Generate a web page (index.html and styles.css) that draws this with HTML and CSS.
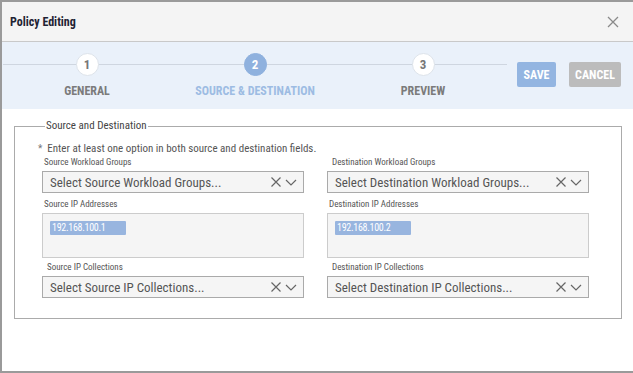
FILE: index.html
```html
<!DOCTYPE html>
<html>
<head>
<meta charset="utf-8">
<link rel="stylesheet" href="styles.css">
</head>
<body>
<div class="modal">
  <div class="header">
    <div class="title">Policy Editing</div>
    <svg class="close" width="12" height="12" viewBox="0 0 12 12"><path d="M1 1L11 11M11 1L1 11" stroke="#8a8a8a" stroke-width="1.3" fill="none"/></svg>
  </div>
  <div class="stepsbar">
    <div class="steps">
      <div class="step">
        <div class="circle">1</div>
        <div class="slabel">GENERAL</div>
      </div>
      <div class="step active">
        <div class="circle">2</div>
        <div class="slabel">SOURCE &amp; DESTINATION</div>
      </div>
      <div class="step">
        <div class="circle">3</div>
        <div class="slabel">PREVIEW</div>
      </div>
    </div>
    <div class="actions">
      <div class="btn save">SAVE</div>
      <div class="btn cancel">CANCEL</div>
    </div>
  </div>
  <div class="content">
    <fieldset class="fs">
      <legend class="legend">Source and Destination</legend>
      <div class="note"><span class="star">*</span>Enter at least one option in both source and destination fields.</div>
      <div class="grid">
        <div class="col">
          <div class="lbl">Source Workload Groups</div>
          <div class="select"><span class="ph">Select Source Workload Groups...</span>
            <span class="icons"><svg width="12" height="12" viewBox="0 0 12 12"><path d="M1.5 1.5L10.5 10.5M10.5 1.5L1.5 10.5" stroke="#666" stroke-width="1.2" fill="none"/></svg><svg width="12" height="12" viewBox="0 0 12 12"><path d="M1 4L6 9L11 4" stroke="#666" stroke-width="1.2" fill="none"/></svg></span>
          </div>
          <div class="lbl">Source IP Addresses</div>
          <div class="area"><span class="chip">192.168.100.1</span></div>
          <div class="lbl ind">Source IP Collections</div>
          <div class="select last"><span class="ph">Select Source IP Collections...</span>
            <span class="icons"><svg width="12" height="12" viewBox="0 0 12 12"><path d="M1.5 1.5L10.5 10.5M10.5 1.5L1.5 10.5" stroke="#666" stroke-width="1.2" fill="none"/></svg><svg width="12" height="12" viewBox="0 0 12 12"><path d="M1 4L6 9L11 4" stroke="#666" stroke-width="1.2" fill="none"/></svg></span>
          </div>
        </div>
        <div class="col">
          <div class="lbl ind">Destination Workload Groups</div>
          <div class="select"><span class="ph">Select Destination Workload Groups...</span>
            <span class="icons"><svg width="12" height="12" viewBox="0 0 12 12"><path d="M1.5 1.5L10.5 10.5M10.5 1.5L1.5 10.5" stroke="#666" stroke-width="1.2" fill="none"/></svg><svg width="12" height="12" viewBox="0 0 12 12"><path d="M1 4L6 9L11 4" stroke="#666" stroke-width="1.2" fill="none"/></svg></span>
          </div>
          <div class="lbl">Destination IP Addresses</div>
          <div class="area"><span class="chip">192.168.100.2</span></div>
          <div class="lbl ind">Destination IP Collections</div>
          <div class="select last"><span class="ph">Select Destination IP Collections...</span>
            <span class="icons"><svg width="12" height="12" viewBox="0 0 12 12"><path d="M1.5 1.5L10.5 10.5M10.5 1.5L1.5 10.5" stroke="#666" stroke-width="1.2" fill="none"/></svg><svg width="12" height="12" viewBox="0 0 12 12"><path d="M1 4L6 9L11 4" stroke="#666" stroke-width="1.2" fill="none"/></svg></span>
          </div>
        </div>
      </div>
    </fieldset>
  </div>
</div>
</body>
</html>
```
FILE: styles.css
```css
* { box-sizing: border-box; }
html, body { margin: 0; padding: 0; }
body {
  background: #9a9a9a;
  font-family: "Roboto Condensed", "Open Sans Condensed", Roboto, "DejaVu Sans Condensed", sans-serif;
  font-stretch: condensed;
  width: 633px;
  height: 373px;
  overflow: hidden;
  white-space: nowrap;
}
.modal {
  margin: 2px 0 0 2px;
  width: 631px;
  height: 369px;
  background: #fff;
  display: flex;
  flex-direction: column;
}
.header {
  height: 40px;
  background: #f4f4f4;
  border-bottom: 1px solid #c9c9c9;
  display: flex;
  align-items: center;
  justify-content: space-between;
  padding: 0 14px 0 8px;
}
.title {
  font-size: 12px;
  font-weight: bold;
  color: #1e2233;
}
.close { display: block; }
.stepsbar {
  height: 67px;
  background: #eaf1fa;
  display: flex;
}
.steps {
  display: flex;
  padding-left: 1px;
  position: relative;
  width: 505px;
}
.steps::before {
  content: "";
  position: absolute;
  left: 1px;
  right: 0;
  top: 22px;
  height: 1px;
  background: #cfd6e0;
}
.step {
  width: 168px;
  display: flex;
  flex-direction: column;
  align-items: center;
  padding-top: 11px;
  position: relative;
}
.circle {
  width: 23px;
  height: 23px;
  border-radius: 50%;
  background: #fff;
  border: 1px solid #dde3ea;
  color: #777;
  font-weight: bold;
  font-size: 13px;
  display: flex;
  align-items: center;
  justify-content: center;
}
.slabel {
  margin-top: 8px;
  font-size: 12px;
  font-weight: bold;
  color: #7b7b7b;
  line-height: 14px;
}
.step.active .circle {
  background: #8fb1de;
  border-color: #8fb1de;
  color: #fff;
}
.step.active .slabel { color: #9dbce3; }
.actions {
  display: flex;
  gap: 13px;
  margin-left: 10px;
  padding-top: 20px;
}
.btn {
  height: 25px;
  display: flex;
  align-items: center;
  justify-content: center;
  color: #fff;
  font-weight: bold;
  font-size: 12px;
  border-radius: 2px;
}
.save { width: 39px; background: #93b5e1; }
.cancel { width: 52px; background: #bcbcbc; }
.content {
  padding: 11px 0 0 12px;
}
.fs {
  margin: 0;
  width: 608px;
  border: 1px solid #ababab;
  padding: 10px 31px 20px 27px;
  min-width: 0;
}
.legend {
  padding: 0 1px;
  margin-left: 3px;
  font-size: 11px;
  color: #444;
  line-height: 12px;
}
.note {
  font-size: 11px;
  color: #555;
  line-height: 13px;
  margin: 0 0 2px -4px;
}
.star { color: #777; margin-right: 5px; font-size: 10px; }
.grid {
  display: grid;
  grid-template-columns: 262px 262px;
  column-gap: 23px;
}
.lbl {
  font-size: 9px;
  color: #555;
  line-height: 11px;
  padding: 0 0 0 2px;
  margin: 0 0 3px;
}
.lbl.ind { padding-left: 5px; }
.select {
  height: 22px;
  border: 1px solid #aaa;
  background: #f5f5f5;
  display: flex;
  align-items: center;
  justify-content: space-between;
  padding: 0 6px 0 7px;
  margin-bottom: 6px;
}
.select.last { margin-bottom: 0; }
.ph { font-size: 13px; color: #555; }
.icons { display: flex; gap: 3px; align-items: center; }
.icons svg { display: block; }
.area {
  height: 45px;
  border: 1px solid #ccc;
  background: #f5f5f5;
  padding: 2px 0 0 7px;
  margin-bottom: 4px;
}
.chip {
  display: inline-block;
  width: 76px;
  height: 14px;
  background: #98b5df;
  color: #fff;
  font-size: 10px;
  line-height: 14px;
  padding-left: 2px;
  border-radius: 1px;
  letter-spacing: -0.3px;
}
```
